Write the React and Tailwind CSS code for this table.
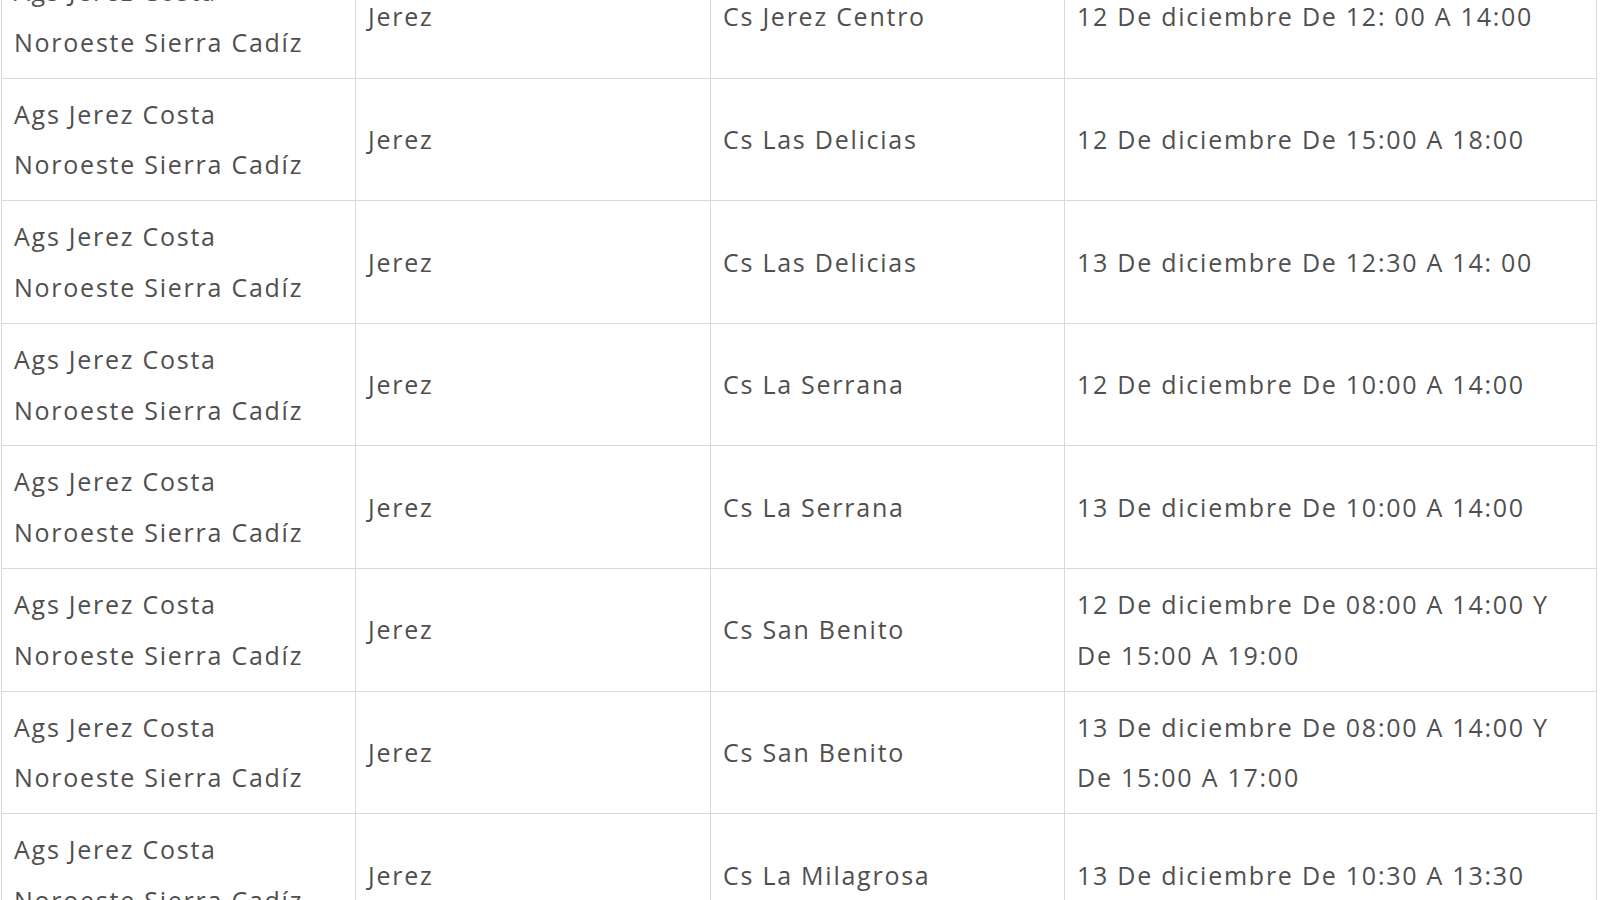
import React from "react";

const rows = [
  ["Cs Jerez Centro", ["12 De diciembre De 12: 00 A 14:00"]],
  ["Cs Las Delicias", ["12 De diciembre De 15:00 A 18:00"]],
  ["Cs Las Delicias", ["13 De diciembre De 12:30 A 14: 00"]],
  ["Cs La Serrana", ["12 De diciembre De 10:00 A 14:00"]],
  ["Cs La Serrana", ["13 De diciembre De 10:00 A 14:00"]],
  ["Cs San Benito", ["12 De diciembre De 08:00 A 14:00 Y", "De 15:00 A 19:00"]],
  ["Cs San Benito", ["13 De diciembre De 08:00 A 14:00 Y", "De 15:00 A 17:00"]],
  ["Cs La Milagrosa", ["13 De diciembre De 10:30 A 13:30"]],
];

function Lines({ lines }) {
  return (
    <>
      {lines.map((l, i) => (
        <div key={i} className="whitespace-nowrap">
          {l}
        </div>
      ))}
    </>
  );
}

export default function App() {
  const td =
    "border border-[#d9d9d9] px-[12px] py-[10px] align-middle text-left";
  return (
    <div className="w-[1600px] h-[900px] overflow-hidden bg-white">
      <table
        className="table-fixed border-collapse mt-[-45px] ml-[1px] w-[1595px] text-[25px] leading-[50.8px] tracking-[1.75px] text-[#4f4f4f]"
        style={{ fontFamily: '"Open Sans", "Noto Sans", sans-serif' }}
      >
        <colgroup>
          <col className="w-[354px]" />
          <col className="w-[355px]" />
          <col className="w-[354px]" />
          <col className="w-[532px]" />
        </colgroup>
        <tbody>
          {rows.map(([centro, horario], i) => (
            <tr key={i}>
              <td className={td}>
                <Lines lines={["Ags Jerez Costa", "Noroeste Sierra Cadíz"]} />
              </td>
              <td className={td}>Jerez</td>
              <td className={td}>{centro}</td>
              <td className={td}>
                <Lines lines={horario} />
              </td>
            </tr>
          ))}
        </tbody>
      </table>
    </div>
  );
}
